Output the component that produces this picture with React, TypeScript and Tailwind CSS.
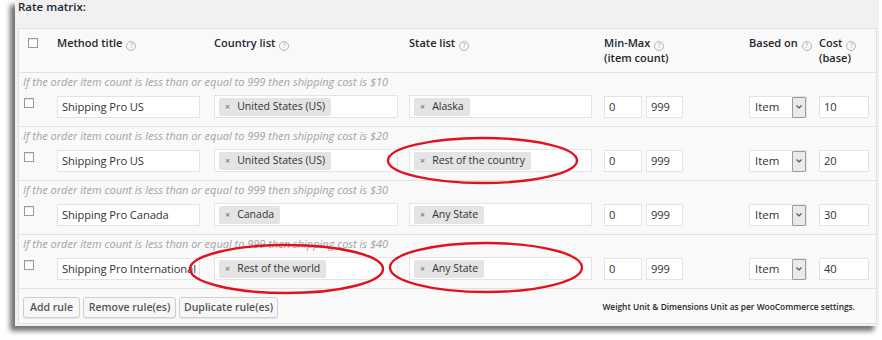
import React from 'react';

type Rule = {
  cost: string;
  title: string;
  country: string;
  state: string;
};

const rules: Rule[] = [
  { cost: '10', title: 'Shipping Pro US', country: 'United States (US)', state: 'Alaska' },
  { cost: '20', title: 'Shipping Pro US', country: 'United States (US)', state: 'Rest of the country' },
  { cost: '30', title: 'Shipping Pro Canada', country: 'Canada', state: 'Any State' },
  { cost: '40', title: 'Shipping Pro International', country: 'Rest of the world', state: 'Any State' },
];

const Help = () => (
  <span className="inline-flex items-center justify-center w-[10px] h-[10px] ml-[4px] rounded-full border border-[#b4b4b4] text-[7px] leading-none font-normal text-[#a8a8a8] align-[-1px]">
    ?
  </span>
);

const Check = ({ className = '' }: { className?: string }) => (
  <span className={`block w-[10px] h-[10px] bg-white border border-[#9a9a9a] shadow-[inset_0_1px_1px_rgba(0,0,0,0.1)] ${className}`} />
);

const Field = ({ value, width }: { value: string; width: string }) => (
  <div className={`${width} h-[22px] flex items-center px-[4px] bg-white border border-[#e4e4e4] text-[11.2px] tracking-[-0.1px] text-[#333] whitespace-nowrap`}>
    {value}
  </div>
);

const TagField = ({ value, width }: { value: string; width: string }) => (
  <div className={`${width} h-[23px] flex items-center px-[4px] bg-white border border-[#e4e4e4]`}>
    <span className="h-[18px] flex items-center gap-[7px] pl-[6px] pr-[6px] bg-[#e4e4e4] rounded-[2px] text-[10.5px] text-[#333] whitespace-nowrap">
      <span className="text-[9px] text-[#888] font-bold">×</span>
      {value}
    </span>
  </div>
);

const Select = () => (
  <div className="w-[58px] h-[22px] flex items-center bg-white border border-[#e4e4e4] pl-[5px] text-[11.5px] text-[#333]">
    <span className="flex-1">Item</span>
    <span className="w-[14px] h-[21px] flex items-center justify-center bg-[#eaeaea] border border-[#9c9c9c] rounded-[1px]">
      <svg width="6" height="4" viewBox="0 0 6 4">
        <path d="M0.5 0.5 L3 3 L5.5 0.5" fill="none" stroke="#555" strokeWidth="1.2" />
      </svg>
    </span>
  </div>
);

const Button = ({ label, width }: { label: string; width: string }) => (
  <button className={`${width} h-[21px] flex items-center justify-center bg-[#f7f7f7] border border-[#cfcfcf] rounded-[3px] shadow-[0_1px_0_#e5e5e5] text-[10.5px] font-semibold text-[#555]`}>
    {label}
  </button>
);

export default function App() {
  return (
    <div className="relative w-[882px] h-[340px] bg-white overflow-hidden font-['Open_Sans',sans-serif]">
      <div className="ml-[15px] w-[864px] h-[326px] bg-[#f1f1f1] shadow-[-5px_5px_5px_rgba(0,0,0,0.55)] pl-[3px] pr-[2px]">
        <div className="h-[28px] text-[11.5px] leading-[14px] font-semibold text-[#23282d]">Rate matrix:</div>

        <div className="border border-[#e1e1e1] bg-[#f9f9f9]">
          {/* Header */}
          <div className="flex h-[43px] pt-[7px] text-[11px] leading-[14px] font-semibold text-[#23282d]">
            <div className="w-[38px] pl-[9px] pt-[2px]">
              <Check />
            </div>
            <div className="w-[157px]">Method title<Help /></div>
            <div className="w-[195px]">Country list<Help /></div>
            <div className="w-[195px]">State list<Help /></div>
            <div className="w-[145px]">
              Min-Max<Help />
              <br />
              (item count)
            </div>
            <div className="w-[70px]">Based on<Help /></div>
            <div className="flex-1">
              Cost<Help />
              <br />
              (base)
            </div>
          </div>

          {/* Rules */}
          {rules.map((rule) => (
            <div key={rule.cost} className="border-t border-[#e1e1e1] pt-[2px] pb-[8px]">
              <div className="h-[14px] pl-[4px] text-[11px] leading-[14px] italic text-[#a3a3a3] whitespace-nowrap">
                If the order item count is less than or equal to 999 then shipping cost is ${rule.cost}
              </div>
              <div className="flex items-start mt-[7px] h-[22px]">
                <div className="w-[38px] pl-[5px] pt-[2px]">
                  <Check />
                </div>
                <div className="w-[157px]">
                  <Field value={rule.title} width="w-[143px]" />
                </div>
                <div className="w-[195px] -mt-[1px]">
                  <TagField value={rule.country} width="w-[184px]" />
                </div>
                <div className="w-[195px] -mt-[1px]">
                  <TagField value={rule.state} width="w-[183px]" />
                </div>
                <div className="w-[145px] flex gap-[4px]">
                  <Field value="0" width="w-[38px]" />
                  <Field value="999" width="w-[37px]" />
                </div>
                <div className="w-[70px]">
                  <Select />
                </div>
                <div className="flex-1">
                  <Field value={rule.cost} width="w-[50px]" />
                </div>
              </div>
            </div>
          ))}

          {/* Footer */}
          <div className="flex items-start border-t border-[#e1e1e1] h-[35px] pt-[8px] pl-[4px]">
            <div className="flex gap-[3px]">
              <Button label="Add rule" width="w-[57px]" />
              <Button label="Remove rule(es)" width="w-[93px]" />
              <Button label="Duplicate rule(es)" width="w-[99px]" />
            </div>
            <div className="ml-auto mr-[21px] pt-[3px] text-[8.4px] leading-[14px] font-semibold text-[#23282d]">
              Weight Unit &amp; Dimensions Unit as per WooCommerce settings.
            </div>
          </div>
        </div>
      </div>

      {/* Highlight ellipses */}
      <svg className="absolute inset-0 pointer-events-none" width="882" height="340" viewBox="0 0 882 340">
        <g fill="none" stroke="#e0121c" strokeWidth="2.4">
          <ellipse cx="482.5" cy="160.5" rx="94.5" ry="22.5" />
          <ellipse cx="286.5" cy="269" rx="96.5" ry="24" />
          <ellipse cx="486" cy="267.5" rx="96" ry="24.5" />
        </g>
      </svg>
    </div>
  );
}
